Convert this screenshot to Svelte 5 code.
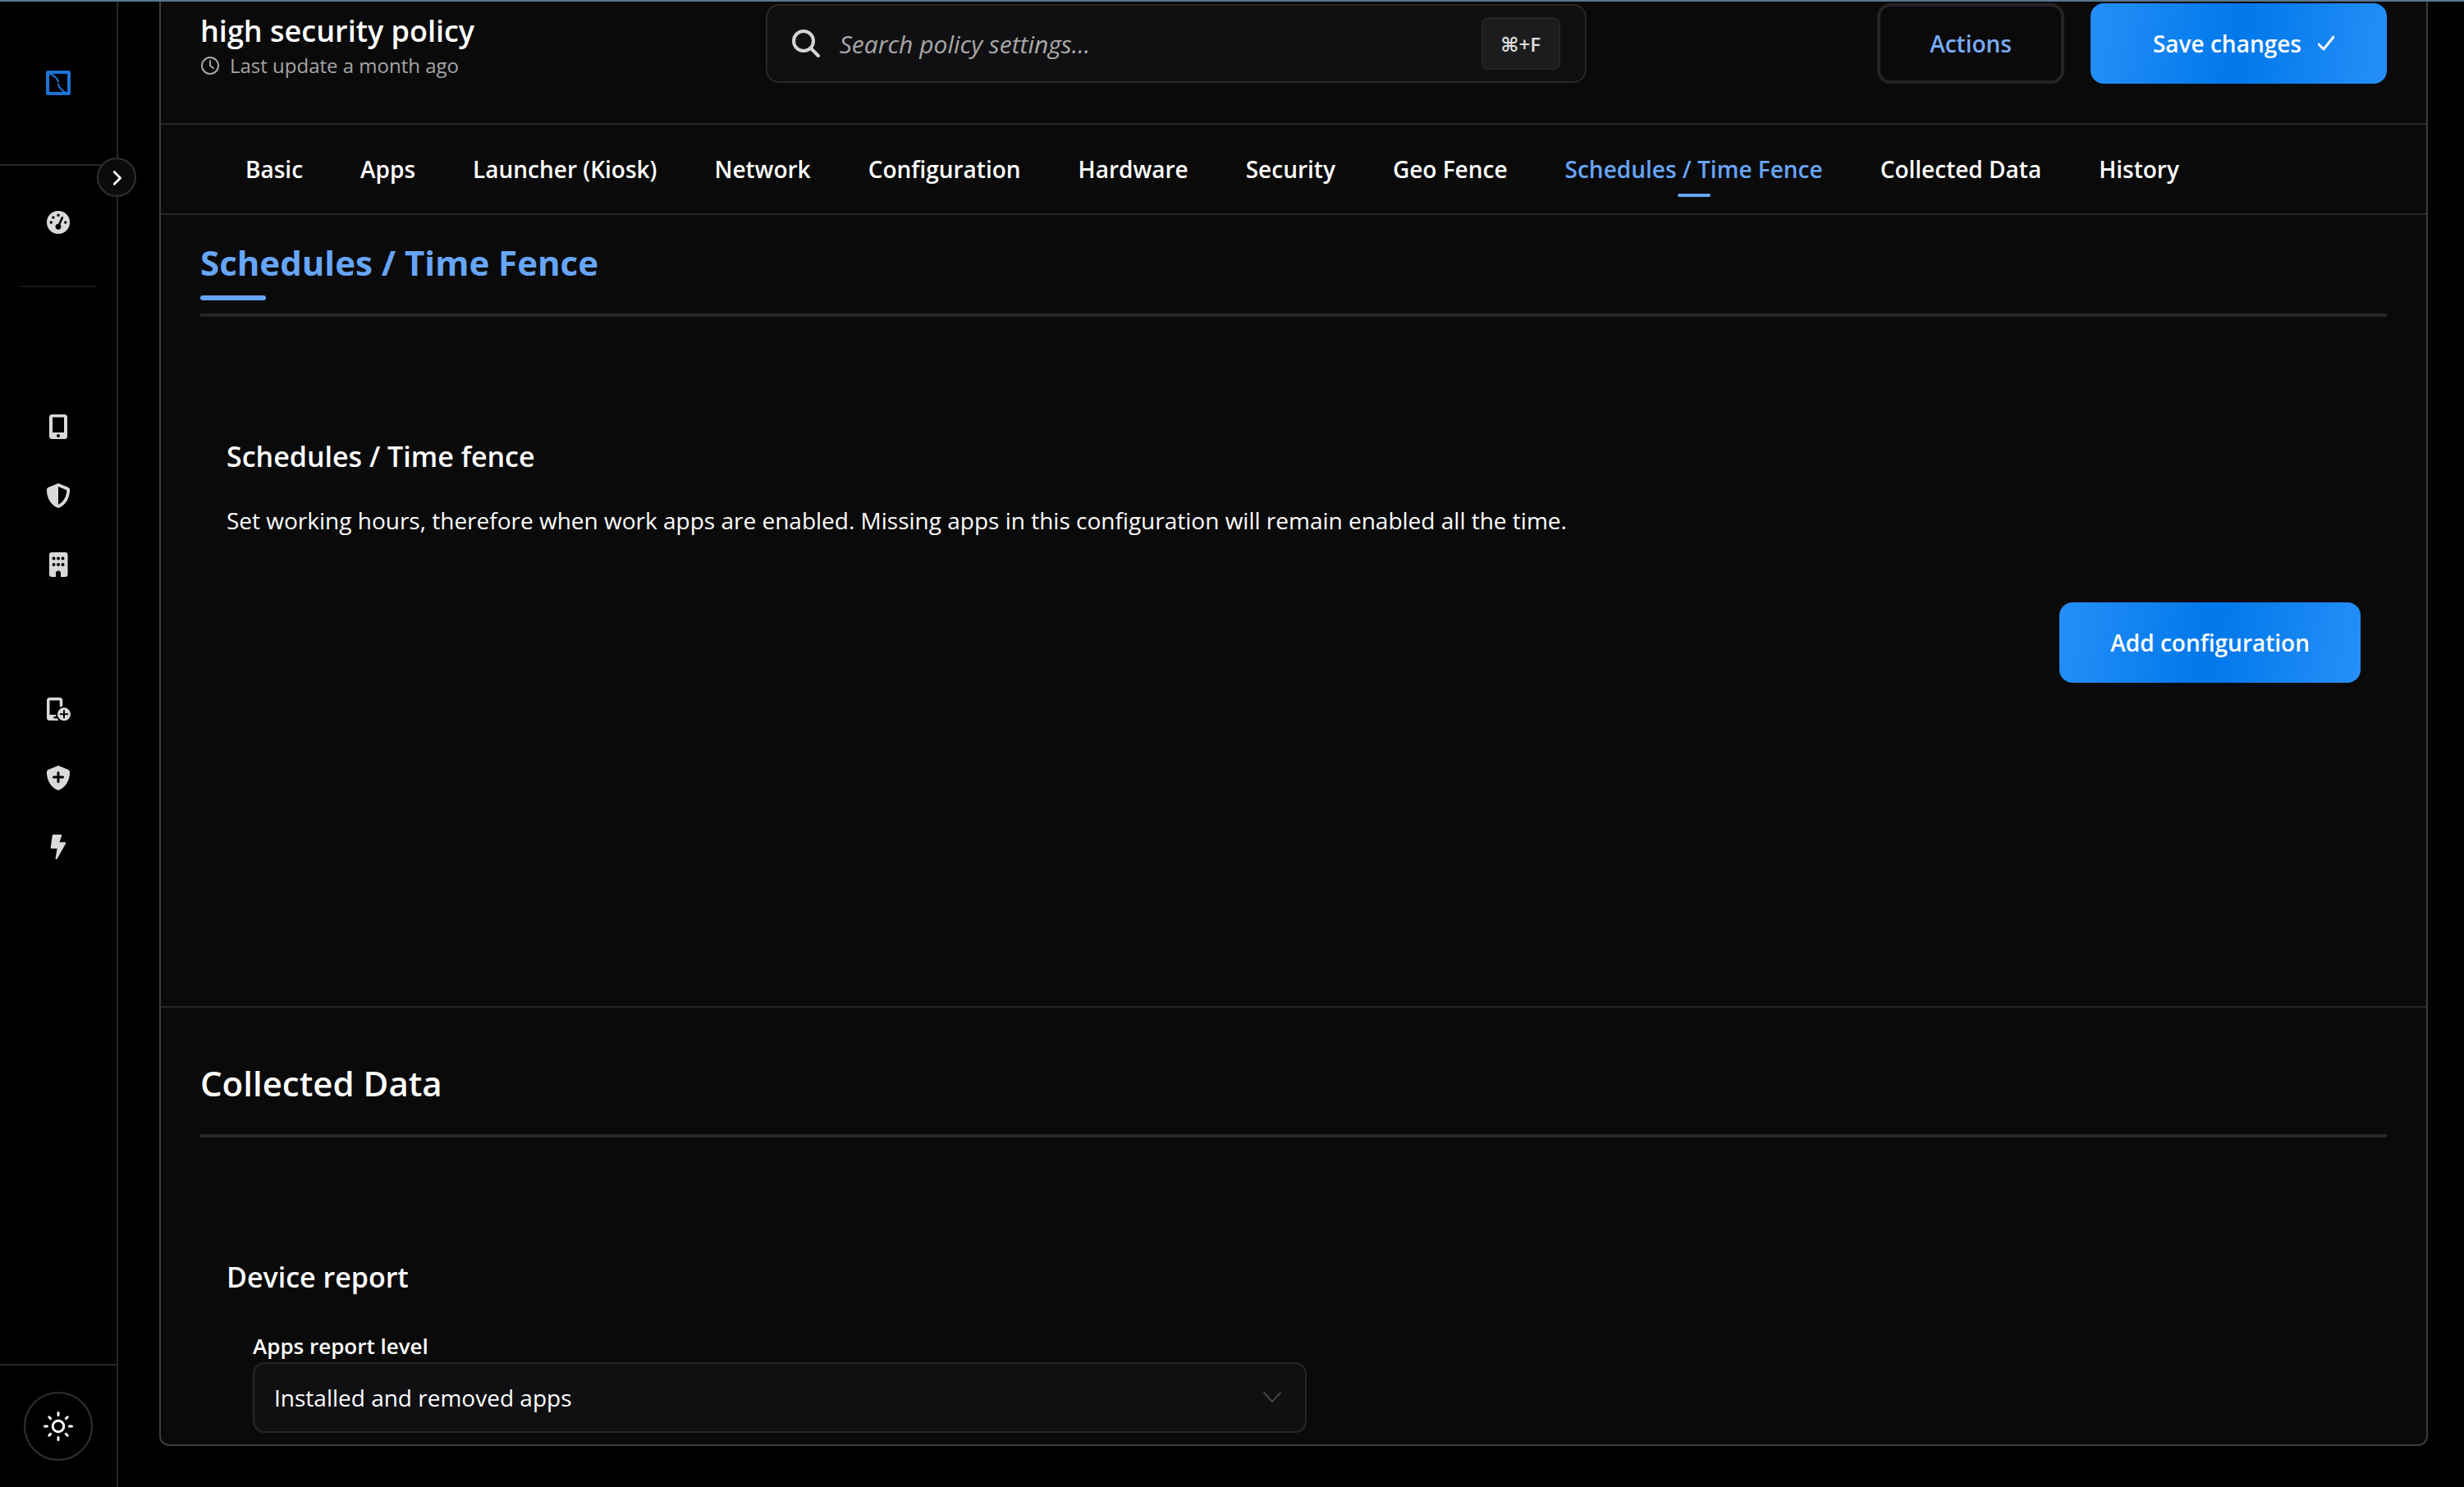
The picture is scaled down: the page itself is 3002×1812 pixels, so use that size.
<script lang="ts">
	const tabs = [
		"Basic",
		"Apps",
		"Launcher (Kiosk)",
		"Network",
		"Configuration",
		"Hardware",
		"Security",
		"Geo Fence",
		"Schedules / Time Fence",
		"Collected Data",
		"History",
	];

	const manageLinks = [
		{ label: "Devices", icon: "device" },
		{ label: "Policies", icon: "policy" },
		{ label: "Company", icon: "company" },
	];

	const quickLinks = [
		{ label: "Add device", icon: "device-add" },
		{ label: "Add policy", icon: "policy-add" },
		{ label: "Quick actions", icon: "bolt" },
	];

	let activeTab = $state("Schedules / Time Fence");
	let search = $state("");
	let reportLevel = $state("Installed and removed apps");
</script>

{#snippet navIcon(name: string)}
	<svg class="nav-icon" viewBox="0 0 32 32" aria-hidden="true">
		{#if name === "dashboard"}
			<path
				transform="translate(2 2) scale(.0547)"
				d="M0 256a256 256 0 1 1 512 0A256 256 0 1 1 0 256zM288 96a32 32 0 1 0-64 0 32 32 0 1 0 64 0zM256 416c35.300 0 64-28.700 64-64c0-17.400-6.900-33.100-18.100-44.600L366 161.700c5.300-12.100-.2-26.300-12.300-31.600s-26.300.2-31.600 12.300L257.900 288c-.6 0-1.300 0-1.900 0c-35.300 0-64 28.700-64 64s28.700 64 64 64zM176 144a32 32 0 1 0-64 0 32 32 0 1 0 64 0zM96 288a32 32 0 1 0 0-64 32 32 0 1 0 0 64zm352-32a32 32 0 1 0-64 0 32 32 0 1 0 64 0z"
			/>
		{:else if name === "device"}
			<rect x="5" y="1" width="22" height="30" rx="3.500" />
			<rect class="hole" x="9" y="4.500" width="14" height="18.500" />
			<circle class="hole" cx="16" cy="27" r="2" />
		{:else if name === "policy"}
			<path
				transform="translate(1 1) scale(.0586)"
				d="M256 0c4.600 0 9.200 1 13.400 2.900L457.700 82.800c22 9.300 38.400 31 38.300 57.200c-.5 99.200-41.300 280.700-213.600 363.200c-16.700 8-36.100 8-52.800 0C57.300 420.700 16.500 239.200 16 140c-.1-26.200 16.300-47.900 38.300-57.200L242.700 2.900C246.800 1 251.400 0 256 0zm0 66.800V444.800C394 378 431.100 230.100 432 141.400L256 66.800z"
			/>
		{:else if name === "company"}
			<rect x="5" y="1" width="22.500" height="30" rx="3" />
			{#each [8.5, 16] as y}
				{#each [10.5, 16, 21.5] as x}
					<circle class="hole" cx={x} cy={y} r="2" />
				{/each}
			{/each}
			<path class="hole" d="M13 31v-4.500a3 3 0 0 1 6 0V31z" />
		{:else if name === "device-add"}
			<path fill-rule="evenodd" d="M5.500 2h12.300a3.500 3.500 0 0 1 3.500 3.500V30H5.500A3.500 3.500 0 0 1 2 26.500v-21A3.500 3.500 0 0 1 5.500 2zM5.500 5.500v17.500h12.300V5.500z" />
			<rect class="hole" x="10.500" y="25" width="4" height="2.500" />
			<circle class="hole" cx="23" cy="22.300" r="10" />
			<circle cx="23" cy="22.300" r="8" />
			<path class="hole-line" d="M23 18v8.600M18.700 22.300h8.600" />
		{:else if name === "policy-add"}
			<path
				transform="translate(1 1) scale(.0586)"
				d="M256 0c4.600 0 9.200 1 13.400 2.900L457.700 82.800c22 9.300 38.400 31 38.300 57.200c-.5 99.200-41.300 280.700-213.600 363.200c-16.700 8-36.100 8-52.800 0C57.300 420.700 16.500 239.200 16 140c-.1-26.200 16.300-47.900 38.300-57.200L242.700 2.900C246.800 1 251.400 0 256 0z"
			/>
			<path class="hole-line thick" d="M16 9.500v11M10.500 15h11" />
		{:else if name === "bolt"}
			<path d="M10 1h9.200c.8 0 1.200.6 1 1.300L17.500 10.300H24c1 0 1.400.8 1 1.600L14.800 30.200c-.8 1.300-2.400.8-2.200-.6l2-11.600H7.800c-.8 0-1.200-.5-1.100-1.200L8.800 2C8.900 1.400 9.300 1 10 1z" />
		{/if}
	</svg>
{/snippet}

<div class="app">
	<aside class="sidebar">
		<div class="brand">
			<a href="#home" aria-label="Home">
				<svg class="logo" viewBox="0 0 30 30" aria-hidden="true">
					<rect x="2" y="2" width="26" height="26" rx="0.500" stroke-width="4" />
					<path d="M5 4c5 2 8.500 5 10 9.500M15 17c1.500 4.500 4.500 7.500 9 10" stroke-width="2.200" />
				</svg>
			</a>
			<button class="expand" aria-label="Expand menu">
				<svg viewBox="0 0 48 48" aria-hidden="true"><path d="M21 17l8 8-8 8" /></svg>
			</button>
		</div>
		<nav class="menu" aria-label="Main">
			<a class="menu-link dashboard" href="#dashboard" aria-label="Dashboard">{@render navIcon("dashboard")}</a>
			<div class="menu-group">
				{#each manageLinks as link}
					<a class="menu-link" href="#{link.icon}" aria-label={link.label}>{@render navIcon(link.icon)}</a>
				{/each}
			</div>
			<div class="menu-group">
				{#each quickLinks as link}
					<a class="menu-link" href="#{link.icon}" aria-label={link.label}>{@render navIcon(link.icon)}</a>
				{/each}
			</div>
		</nav>
		<div class="sidebar-footer">
			<button class="theme" aria-label="Toggle theme">
				<svg viewBox="0 0 40 40" aria-hidden="true">
					<circle cx="20" cy="20" r="6.800" />
					<path d="M20 3.500v3M20 33.500v3M3.500 20h3M33.500 20h3M8.800 8.800l1.800 1.800M29.400 29.400l1.800 1.800M8.800 31.200l1.800-1.800M29.400 10.600l1.800-1.800" />
				</svg>
			</button>
		</div>
	</aside>

	<main class="panel">
		<header class="panel-header">
			<div class="title">
				<h1>high security policy</h1>
				<p class="updated">
					<svg viewBox="0 0 24 24" aria-hidden="true">
						<circle cx="12" cy="12" r="10" />
						<path d="M12 6v6l4 3" />
					</svg>
					Last update a month ago
				</p>
			</div>
			<label class="search">
				<svg viewBox="0 0 34 34" aria-hidden="true">
					<circle cx="14" cy="14" r="12" />
					<path d="M23 23l9 9" />
				</svg>
				<input type="text" placeholder="Search policy settings..." aria-label="Search policy settings" bind:value={search} />
				<kbd>⌘+F</kbd>
			</label>
			<div class="header-actions">
				<button class="btn outline">Actions</button>
				<button class="btn primary save">
					Save changes
					<svg viewBox="0 0 20 20" aria-hidden="true"><path d="M1 11l6 6L19 2" /></svg>
				</button>
			</div>
		</header>

		<nav class="tabs" aria-label="Policy sections">
			{#each tabs as tab}
				<a class="tab" class:active={tab === activeTab} href="#{tab}" onclick={() => (activeTab = tab)}>{tab}</a>
			{/each}
		</nav>

		<section class="section current">
			<h2>Schedules / Time Fence</h2>
			<div class="section-body">
				<h3>Schedules / Time fence</h3>
				<p class="description">
					Set working hours, therefore when work apps are enabled. Missing apps in this configuration will remain enabled all the time.
				</p>
				<div class="section-actions">
					<button class="btn primary">Add configuration</button>
				</div>
			</div>
		</section>

		<section class="section">
			<h2>Collected Data</h2>
			<div class="section-body">
				<h3>Device report</h3>
				<div class="field">
					<label for="report-level">Apps report level</label>
					<div class="select">
						<select id="report-level" bind:value={reportLevel}>
							<option>Installed and removed apps</option>
							<option>Installed apps</option>
							<option>None</option>
						</select>
						<svg viewBox="0 0 24 24" aria-hidden="true"><path d="M2 6l10 11L22 6" /></svg>
					</div>
				</div>
			</div>
		</section>
	</main>
</div>

<style>
	:global(body) {
		margin: 0;
		background: #000;
	}

	.app {
		--line: #272727;
		--accent: #67a5f7;
		display: flex;
		height: 100vh;
		box-sizing: border-box;
		border-top: 2px solid #56788f;
		overflow: hidden;
		background: #000;
		color: #fff;
		font-family: "Open Sans", sans-serif;
		font-size: 28px;
	}

	h1, h2, h3, p {
		margin: 0;
	}

	button, input, select {
		font: inherit;
		color: inherit;
	}

	button {
		padding: 0;
		cursor: pointer;
	}

	svg {
		display: block;
		flex: none;
		fill: none;
		stroke: currentColor;
		stroke-linecap: round;
		stroke-linejoin: round;
	}

	/* sidebar */
	.sidebar {
		display: flex;
		flex-direction: column;
		flex: none;
		width: 142px;
		border-right: 2px solid var(--line);
	}

	.brand {
		position: relative;
		display: flex;
		justify-content: center;
		height: 198px;
		border-bottom: 2px solid var(--line);
	}

	.logo {
		width: 30px;
		height: 30px;
		margin-top: 84px;
		stroke: #1f72d6;
	}

	.expand {
		position: absolute;
		right: -24px;
		bottom: -40px;
		width: 48px;
		height: 48px;
		border: 2px solid #303030;
		border-radius: 50%;
		background: #0b0b0b;
	}

	.expand svg {
		width: 44px;
		height: 44px;
		stroke-width: 3;
	}

	.menu {
		display: flex;
		flex-direction: column;
		flex: 1;
	}

	.menu-link {
		display: flex;
		align-items: center;
		justify-content: center;
		height: 84px;
	}

	.menu-link.dashboard {
		height: 138px;
		margin: 0 24px;
		padding-bottom: 8px;
		border-bottom: 2px solid #161616;
	}

	.menu-group {
		padding-top: 128px;
	}

	.menu-group + .menu-group {
		padding-top: 92px;
	}

	.nav-icon {
		width: 32px;
		height: 32px;
		fill: #dadada;
		stroke: none;
	}

	.hole {
		fill: #000;
	}

	.hole-line {
		stroke: #000;
		stroke-width: 2;
	}

	.hole-line.thick {
		stroke-width: 3;
	}

	.sidebar-footer {
		display: flex;
		justify-content: center;
		padding: 32px 0;
		border-top: 2px solid var(--line);
	}

	.theme {
		display: flex;
		align-items: center;
		justify-content: center;
		width: 84px;
		height: 84px;
		border: 2px solid #303030;
		border-radius: 50%;
		background: #000;
	}

	.theme svg {
		width: 40px;
		height: 40px;
		stroke-width: 3;
	}

	/* main panel */
	.panel {
		flex: 1;
		min-width: 0;
		margin: 0 44px 50px 50px;
		border: 2px solid #3c3c3c;
		border-top: 0;
		border-radius: 0 0 12px 12px;
		background: #0a0a0a;
		overflow: hidden;
	}

	.panel-header {
		display: flex;
		align-items: flex-start;
		justify-content: space-between;
		height: 146px;
		padding: 2px 48px 0;
		border-bottom: 2px solid var(--line);
	}

	h1 {
		padding-top: 10px;
		font-size: 36px;
		font-weight: 600;
		line-height: 48px;
	}

	.updated {
		display: flex;
		align-items: center;
		gap: 12px;
		color: #a5a5a5;
		font-size: 24px;
		line-height: 36px;
	}

	.updated svg {
		width: 24px;
		height: 24px;
		stroke-width: 2;
	}

	.search {
		display: flex;
		align-items: center;
		box-sizing: border-box;
		width: 1000px;
		height: 96px;
		margin-top: 1px;
		padding: 0 30px;
		border: 2px solid var(--line);
		border-radius: 16px;
		background: #101012;
	}

	.search svg {
		width: 34px;
		height: 34px;
		color: #d5d5d5;
		stroke-width: 4;
	}

	.search input {
		flex: 1;
		min-width: 0;
		margin: 0 24px;
		padding: 0;
		border: 0;
		outline: 0;
		background: none;
		font-size: 30px;
		font-style: italic;
	}

	.search input::placeholder {
		color: #a8a8a8;
		opacity: 1;
	}

	kbd {
		display: flex;
		align-items: center;
		justify-content: center;
		box-sizing: border-box;
		width: 96px;
		height: 64px;
		border: 2px solid #242427;
		border-radius: 8px;
		background: #1c1c1f;
		color: #ddd;
		font-family: "Open Sans", "DejaVu Sans", sans-serif;
		font-size: 24px;
		font-weight: 600;
	}

	.header-actions {
		display: flex;
		gap: 32px;
	}

	.btn {
		display: flex;
		align-items: center;
		gap: 20px;
		height: 98px;
		padding: 0 62px;
		border: 0;
		border-radius: 16px;
		font-size: 28px;
		font-weight: 600;
	}

	.btn.primary {
		background: linear-gradient(100deg, #268ff8, #0078ea 50%, #268ff8);
	}

	.btn.save {
		padding: 0 64px 0 76px;
	}

	.btn.outline {
		padding: 0 60px;
		border: 4px solid #242427;
		background: none;
		color: #7aabf5;
	}

	.btn svg {
		width: 20px;
		height: 20px;
		stroke-width: 3;
	}

	.tabs {
		display: flex;
		height: 108px;
		padding: 0 68px;
		border-bottom: 2px solid var(--line);
	}

	.tab {
		display: flex;
		position: relative;
		align-items: center;
		padding: 0 35px;
		color: #fff;
		font-weight: 600;
		text-decoration: none;
		white-space: nowrap;
	}

	.tab.active {
		color: var(--accent);
	}

	.tab.active::after {
		content: "";
		position: absolute;
		bottom: 20px;
		left: calc(50% - 20px);
		width: 40px;
		height: 4px;
		border-radius: 2px;
		background: var(--accent);
	}

	/* policy sections */
	.section {
		padding: 62px 48px;
		border-top: 2px solid var(--line);
	}

	.section.current {
		height: 872px;
		padding: 28px 48px 64px;
		border-top: 0;
	}

	h2 {
		position: relative;
		padding-bottom: 32px;
		border-bottom: 4px solid var(--line);
		font-size: 42px;
		font-weight: 600;
		line-height: 60px;
	}

	.current h2 {
		color: var(--accent);
		font-weight: 700;
	}

	.current h2::after {
		content: "";
		position: absolute;
		bottom: 16px;
		left: 0;
		width: 80px;
		height: 6px;
		border-radius: 3px;
		background: var(--accent);
	}

	.section-body {
		padding: 146px 32px 0;
	}

	h3 {
		font-size: 34px;
		font-weight: 600;
		line-height: 48px;
	}

	.description {
		padding-top: 34px;
		line-height: 40px;
	}

	.section-actions {
		display: flex;
		justify-content: flex-end;
		padding-top: 80px;
	}

	.field {
		padding: 40px 0 0 32px;
	}

	.field label {
		display: block;
		font-size: 26px;
		font-weight: 600;
		line-height: 40px;
	}

	.select {
		display: grid;
		align-items: center;
		width: 50%;
	}

	.select select {
		grid-area: 1 / 1;
		width: 100%;
		height: 86px;
		padding: 0 24px;
		border: 2px solid var(--line);
		border-radius: 14px;
		background: #101012;
		appearance: none;
	}

	.select svg {
		grid-area: 1 / 1;
		justify-self: end;
		width: 24px;
		height: 24px;
		margin-right: 30px;
		color: #444;
		pointer-events: none;
		stroke-width: 2;
	}
</style>
